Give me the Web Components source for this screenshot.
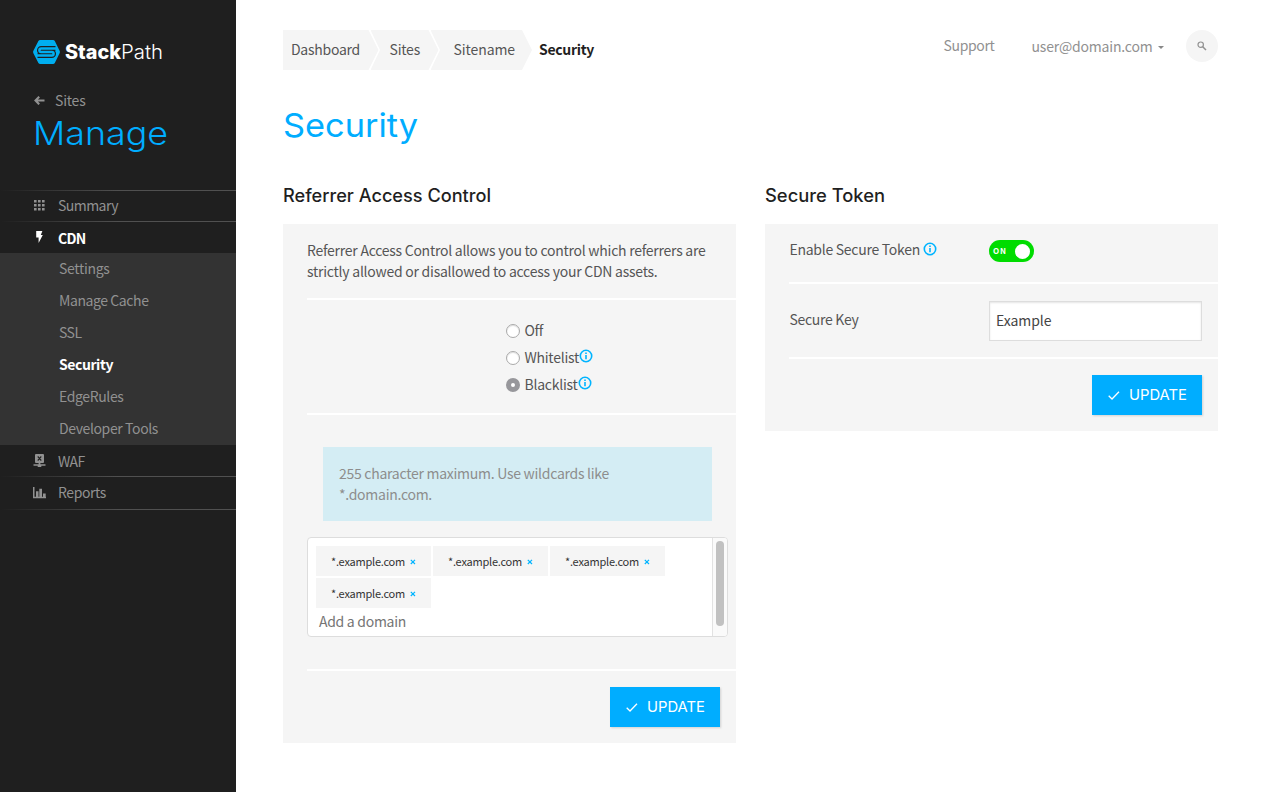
<!DOCTYPE html>
<html lang="en">
<head>
<meta charset="utf-8">
<title>Security</title>
<style>
html,body{margin:0;height:100%}
body{background:#fff;overflow:hidden;font-family:"Noto Sans CJK SC",sans-serif;font-size:14px;line-height:20px;color:#555}
</style>
</head>
<body>
<sp-app></sp-app>
<script>
const define=(name,html,ready)=>customElements.define(name,class extends HTMLElement{
  connectedCallback(){
    if(this.shadowRoot)return;
    const t=document.createElement('template');
    t.innerHTML=html;
    this.attachShadow({mode:'open'}).append(t.content.cloneNode(true));
    if(ready)ready(this,this.shadowRoot);
  }
});

/* Text that fills the width given in w: by tracking, or by wider glyphs when "wide" is set */
define('fit-text',`<style>:host{display:inline-block;white-space:nowrap;flex:none}</style><slot></slot>`,el=>{
  const w=+el.getAttribute('w');
  const natural=el.getBoundingClientRect().width;
  if(el.hasAttribute('wide')){
    el.style.width=natural+'px';
    el.style.transformOrigin='0 50%';
    el.style.transform='scaleX('+w/natural+')';
    el.style.marginRight=(w-natural)+'px';
  }else el.style.letterSpacing=((w-natural)/el.textContent.length)+'px';
});

const icons={
  back:['0 0 11 9','<path d="M5.200.700 1.500 4.500 5.200 8.300M1.800 4.500H10.500" fill="none" stroke="currentColor" stroke-width="2.100"/>'],
  grid:['0 0 11 11','<path d="M0 0h2.6v2.6H0zM4 0h2.6v2.6H4zM8 0h2.6v2.6H8zM0 4h2.6v2.6H0zM4 4h2.6v2.6H4zM8 4h2.6v2.6H8zM0 8h2.6v2.6H0zM4 8h2.6v2.6H4zM8 8h2.6v2.6H8z" fill="currentColor"/>'],
  bolt:['0 0 7 12','<path d="M.2 0H6.4L4.8 4H6.8L2.6 12V6.6H.2z" fill="currentColor"/>'],
  waf:['0 0 13 13','<path fill-rule="evenodd" d="M3 0h7q1 0 1 1v7q0 1-1 1H7.4v1.3h5.1v1.5H8.3v1.1H4.7v-1.1H.5v-1.5h5.1V9H3Q2 9 2 8V1q0-1 1-1zM4.3 2.9 5.9 4.5 4.3 6.1 5.1 6.9 6.5 5.4 7.9 6.9 8.7 6.1 7.1 4.5 8.7 2.9 7.9 2.1 6.5 3.6 5.1 2.1z" fill="currentColor"/>'],
  bars:['0 0 13 12','<path d="M0 0h1.5v9.700H13v1.600H0zM3 4.300h2.500v5.600H3zM6.300 1.800h2.700v8H6.300zM10 6.600h2.700v3.200H10z" fill="currentColor"/>'],
  search:['0 0 10 10','<circle cx="3.7" cy="3.7" r="2.7" fill="none" stroke="currentColor" stroke-width="1.2"/><path d="M5.7 5.7 9 9" stroke="currentColor" stroke-width="1.5"/>'],
  info:['0 0 14 14','<circle cx="7" cy="7" r="5.7" fill="none" stroke="#00b4ff" stroke-width="1.6"/><path d="M6.200 3.600h1.600V5H6.200zM6.200 6.100h1.600v4.200H6.200z" fill="#00b4ff"/>'],
  check:['0 0 12 9','<path d="M.7 4.8 4 8 11 .8" fill="none" stroke="currentColor" stroke-width="1.3"/>'],
  close:['0 0 6 6','<path d="M.8.8 5 5M5 .8.8 5" fill="none" stroke="#00b4ff" stroke-width="1.2"/>'],
  logo:['0 0 27 24','<clipPath id="h"><path d="M7.2 0H20q1.2 0 1.8 1L26.6 10.800q.6 1.200 0 2.400L21.800 23q-.6 1-1.800 1H7.200q-1.200 0-1.800-1L.4 13.200q-.6-1.200 0-2.400L5.400 1q.6-1 1.800-1z"/></clipPath><g clip-path="url(#h)" fill="none"><rect width="27" height="24" fill="#00aeef"/><path d="M22.500 8.400H8.200a1.800 1.800 0 0 0 0 3.600H18.800a1.800 1.800 0 0 1 0 3.600H4.500" stroke="#1f1f1f" stroke-width="4.900"/><path d="M24 8.400H8.200a1.800 1.800 0 0 0 0 3.600H18.800a1.800 1.800 0 0 1 0 3.600H3" stroke="#00aeef" stroke-width="2.500"/></g>']
};
define('sp-icon',`<style>:host{display:inline-block;flex:none;line-height:0}svg{display:block;width:100%;height:100%}</style><svg></svg>`,(el,r)=>{
  const [box,body]=icons[el.getAttribute('name')],[,,w,h]=box.split(' ');
  el.style.width=w+'px';el.style.height=h+'px';
  const s=r.querySelector('svg');s.setAttribute('viewBox',box);s.innerHTML=body;
});

define('nav-item',`<style>
:host{display:flex;align-items:center;box-sizing:border-box;height:var(--h,32px);padding-left:33px;padding-bottom:var(--pb,2px);color:#919191}
:host([active]){color:#fff;font-weight:700}
:host([sub]){padding-left:59px}
.i{width:25px;height:14px;display:flex;align-items:center}
:host([sub]) .i{display:none}
</style><span class="i"><slot name="icon"></slot></span><slot></slot>`);
define('nav-line',`<style>:host{display:block;height:1px;background:linear-gradient(90deg,#1f1f1f,#505050 50%)}</style>`);

define('sp-sidebar',`<style>
:host{display:block;width:236px;background:#1f1f1f;color:#919191;flex:none}
.logo{display:flex;align-items:center;padding:40px 0 0 33px;height:24px;color:#fff;font-family:Inter,sans-serif;font-size:19.500px}
.logo sp-icon{margin-right:5px}.logo b{font-weight:800}.logo .l{font-weight:300}
.back{display:flex;align-items:center;padding:26px 0 0 34px;height:20px}
.back sp-icon{margin-right:10px}
h1{margin:0;padding:3px 0 0 33px;font:300 33px/40px Inter,sans-serif;color:#00adff;height:40px}
nav{display:block;padding-top:37px}
.sub{background:#333}
</style>
<div class="logo"><sp-icon name="logo"></sp-icon><b><fit-text wide w="56">Stack</fit-text></b><fit-text wide class="l" w="42">Path</fit-text></div>
<div class="back"><sp-icon name="back"></sp-icon><fit-text w="30.5">Sites</fit-text></div>
<h1><fit-text wide w="135">Manage</fit-text></h1>
<nav>
<nav-line></nav-line>
<nav-item style="--h:30px"><sp-icon slot="icon" name="grid" style="margin-left:1px"></sp-icon><fit-text w="60">Summary</fit-text></nav-item>
<nav-line></nav-line>
<nav-item active style="--h:31px;--pb:0"><sp-icon slot="icon" name="bolt" style="margin-left:3px;margin-top:-1px"></sp-icon><fit-text w="27.5">CDN</fit-text></nav-item>
<div class="sub">
<nav-item sub><fit-text w="50.5">Settings</fit-text></nav-item>
<nav-item sub><fit-text w="89.5">Manage Cache</fit-text></nav-item>
<nav-item sub><fit-text w="22.5">SSL</fit-text></nav-item>
<nav-item sub active><fit-text w="54">Security</fit-text></nav-item>
<nav-item sub><fit-text w="64.5">EdgeRules</fit-text></nav-item>
<nav-item sub><fit-text w="99">Developer Tools</fit-text></nav-item>
</div>
<nav-item style="--h:31px;--pb:0"><sp-icon slot="icon" name="waf"></sp-icon><fit-text w="26.5">WAF</fit-text></nav-item>
<nav-line></nav-line>
<nav-item><sp-icon slot="icon" name="bars" style="margin-top:2px"></sp-icon><fit-text w="48">Reports</fit-text></nav-item>
<nav-line></nav-line>
</nav>`);

define('sp-breadcrumb',`<style>
:host{display:flex;height:40px;line-height:38px}
span{background:#f5f5f5;box-sizing:border-box;height:40px}
.a{width:95.500px;padding-left:8px;clip-path:polygon(0 0,85.500px 0,100% 50%,85.500px 100%,0 100%)}
.b{width:68px;margin-left:-8px;padding-left:19px;clip-path:polygon(0 0,58px 0,100% 50%,58px 100%,0 100%,9.500px 50%)}
.c{width:101.500px;margin-left:-8px;padding-left:23px;clip-path:polygon(0 0,91.500px 0,100% 50%,91.500px 100%,0 100%,9.500px 50%)}
b{margin-left:7px;color:#1f1f1f}
</style><span class="a"><fit-text w="69">Dashboard</fit-text></span><span class="b"><fit-text w="30.5">Sites</fit-text></span><span class="c"><fit-text w="61.5">Sitename</fit-text></span><b><fit-text w="55">Security</fit-text></b>`);

define('sp-topbar',`<style>
:host{display:flex;justify-content:space-between;height:40px}
.r{display:flex;align-items:flex-start;color:#919191;height:32px}
.s{margin:5px 37px 0 0}.u{margin-top:6px}
i{width:0;border:3.500px solid transparent;border-top:3.500px solid #888;border-bottom:0;margin:16px 22.500px 0 5px}
.c{width:32px;height:32px;border-radius:50%;background:#f5f5f5;display:flex;align-items:center;justify-content:center}
</style><sp-breadcrumb></sp-breadcrumb><div class="r"><fit-text class="s" w="51">Support</fit-text><fit-text class="u" w="121">user@domain.com</fit-text><i></i><span class="c"><sp-icon name="search"></sp-icon></span></div>`);

define('sp-button',`<style>
:host{display:flex;align-items:center;box-sizing:border-box;width:110px;height:40px;padding-left:16px;background:#00adff;color:#fff;box-shadow:1px 1px 2px rgba(0,0,0,.15);font:400 14px/20px Inter,sans-serif}
sp-icon{margin-right:9px}
</style><sp-icon name="check"></sp-icon><slot></slot>`);

define('sp-card',`<style>
:host{display:block;width:453px}
h2{margin:0 0 18px;font:500 18px/20px Inter,sans-serif;color:#1f1f1f;height:20px}
.p{background:#f5f5f5;padding-left:24px}
</style><h2><slot name="title"></slot></h2><div class="p"><slot></slot></div>`);
define('card-row',`<style>:host{display:block;box-sizing:border-box;border-bottom:2px solid #fff}:host([last]){border:0;display:flex;justify-content:flex-end;padding:16px;height:72px}</style><slot></slot>`);

define('sp-radio',`<style>
:host{display:flex;align-items:center;height:27px}
i{box-sizing:border-box;width:14px;height:14px;border:1px solid #aaa;border-radius:50%;background:#fff;margin:2px 4.500px 0 0;box-shadow:inset 0 1px 1px #ddd}
:host([checked]) i{border:5px solid #97979b;box-shadow:none}
</style><i></i><slot></slot>`);

define('sp-tag',`<style>:host{display:flex;align-items:center;box-sizing:border-box;width:115px;height:30px;padding-left:15px;background:#f5f5f5;color:#333;font-size:11px}sp-icon{margin:1px 0 0 5px}</style><slot></slot><sp-icon name="close"></sp-icon>`);
define('tag-input',`<style>
:host{display:flex;box-sizing:border-box;width:421px;height:100px;border:1px solid #ddd;border-radius:4px;background:#fff;overflow:hidden}
.b{flex:1;padding:8px 0 0 8px}
.t{display:flex;flex-wrap:wrap;gap:2px}
.n{padding:3px 0 0 3px;color:#757575}
.s{width:15px;box-sizing:border-box;border-left:1px solid #e2e2e2;background:#fafafa;padding:3px 0 0 3px}
.s i{display:block;width:8px;height:85px;border-radius:4px;background:#c1c1c1}
</style><div class="b"><div class="t"><slot></slot></div><div class="n"><fit-text w="87">Add a domain</fit-text></div></div><div class="s"><i></i></div>`);

define('sp-toggle',`<style>
:host{display:flex;align-items:center;justify-content:space-between;box-sizing:border-box;width:45px;height:22px;padding:0 4px;border-radius:11px;background:#00dc00;color:#fff;font-size:8px;font-weight:700;line-height:20px}
i{width:15px;height:15px;border-radius:50%;background:#fff}
</style><fit-text w="14">ON</fit-text><i></i>`);

define('referrer-card',`<style>
.p{height:76px;padding-top:16px;line-height:21px}.p fit-text{display:table}
.r{height:115px;padding:16px 0 0 199px}
.m{height:256px;padding-top:32px}
.note{box-sizing:border-box;width:389px;height:74px;margin:0 0 16px 16px;padding:16px;background:#d4edf4;color:#8d8d8d;line-height:21px}
.note fit-text{display:table}
sp-icon[name=info]{margin-top:-1px}
</style><sp-card><fit-text wide slot="title" w="208">Referrer Access Control</fit-text>
<card-row class="p"><fit-text w="398.5">Referrer Access Control allows you to control which referrers are</fit-text><fit-text w="350.5">strictly allowed or disallowed to access your CDN assets.</fit-text></card-row>
<card-row class="r"><sp-radio><fit-text w="18.5">Off</fit-text></sp-radio><sp-radio><fit-text w="54.5">Whitelist</fit-text><sp-icon name="info"></sp-icon></sp-radio><sp-radio checked><fit-text w="53">Blacklist</fit-text><sp-icon name="info"></sp-icon></sp-radio></card-row>
<card-row class="m"><div class="note"><fit-text w="270">255 character maximum. Use wildcards like</fit-text><fit-text w="93">*.domain.com.</fit-text></div>
<tag-input><sp-tag><fit-text w="74">*.example.com</fit-text></sp-tag><sp-tag><fit-text w="74">*.example.com</fit-text></sp-tag><sp-tag><fit-text w="74">*.example.com</fit-text></sp-tag><sp-tag><fit-text w="74">*.example.com</fit-text></sp-tag></tag-input></card-row>
<card-row last><sp-button><fit-text wide w="58">UPDATE</fit-text></sp-button></card-row></sp-card>`);

define('token-card',`<style>
.a{height:60px;padding-top:16px}.b{height:75px;padding-top:17px}
.g{display:grid;grid-template-columns:200px 213px}
.l{display:flex;align-items:center;height:20px;padding-left:.5px;margin-top:-1px}.b .l{margin-top:8px}
.l sp-icon{margin-left:3px}
.in{box-sizing:border-box;height:40px;border:1px solid #ddd;box-shadow:inset 0 1px 2px #e5e5e5;background:#fff;line-height:36px;padding-left:6px;color:#444}
</style><sp-card><fit-text wide slot="title" w="120">Secure Token</fit-text>
<card-row class="a"><div class="g"><div class="l"><fit-text w="130.5">Enable Secure Token</fit-text><sp-icon name="info"></sp-icon></div><sp-toggle></sp-toggle></div></card-row>
<card-row class="b"><div class="g"><div class="l"><fit-text w="69">Secure Key</fit-text></div><div class="in"><fit-text w="55.5">Example</fit-text></div></div></card-row>
<card-row last><sp-button><fit-text wide w="58">UPDATE</fit-text></sp-button></card-row></sp-card>`);

define('sp-app',`<style>
:host{display:flex;height:100vh}
main{flex:1;box-sizing:border-box;padding:30px 44px 0 47px}
h1{margin:35px 0 41px;height:40px;font:400 33px/40px Inter,sans-serif;color:#00adff}
.c{display:flex;gap:29px}
</style><sp-sidebar></sp-sidebar><main><sp-topbar></sp-topbar><h1><fit-text wide w="135">Security</fit-text></h1><div class="c"><referrer-card></referrer-card><token-card></token-card></div></main>`);
</script>
</body>
</html>
